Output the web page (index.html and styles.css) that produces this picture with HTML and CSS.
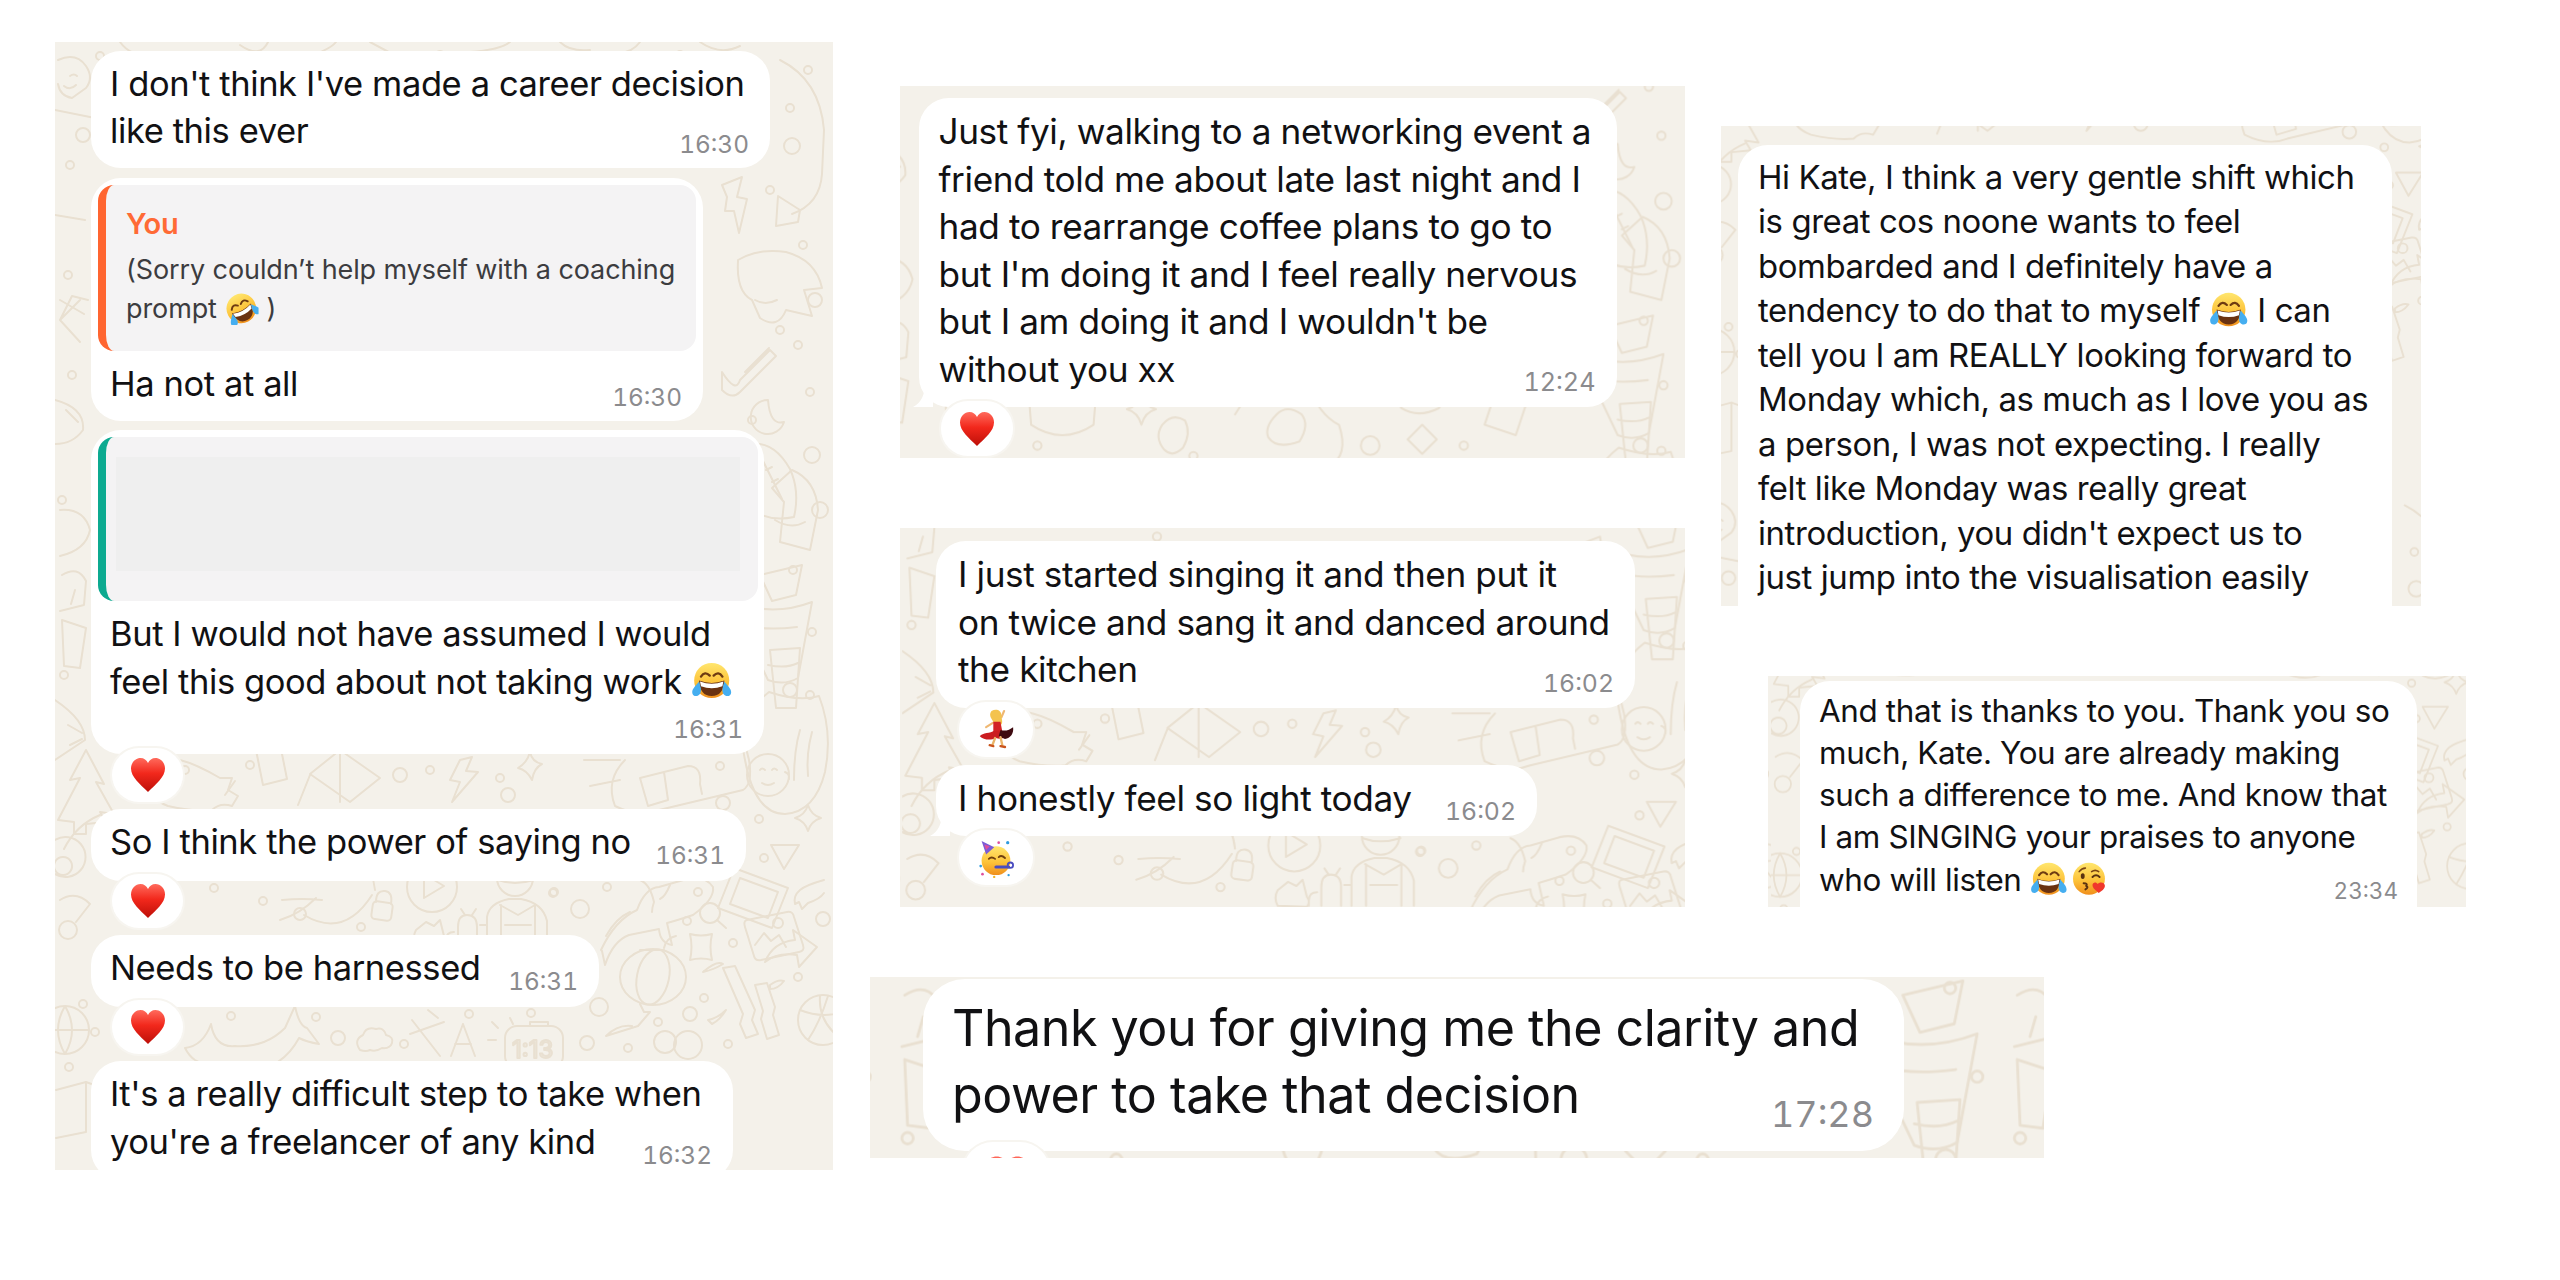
FILE: index.html
```html
<!DOCTYPE html>
<html lang="en">
<head>
<meta charset="utf-8">
<title>Chat screenshots</title>
<link rel="stylesheet" href="styles.css">
</head>
<body>
<svg class="defs" aria-hidden="true">
  <defs>
    <linearGradient id="g-heart" x1="0" y1="0" x2="0" y2="1"><stop offset="0" stop-color="#ff6a5c"/><stop offset=".45" stop-color="#f2281c"/><stop offset="1" stop-color="#bd0f08"/></linearGradient>
    <linearGradient id="g-face" x1="0" y1="0" x2="0" y2="1"><stop offset="0" stop-color="#ffe66e"/><stop offset=".55" stop-color="#fdc33a"/><stop offset="1" stop-color="#f08f1c"/></linearGradient>
    <symbol id="heart" viewBox="0 0 36 36"><path fill="url(#g-heart)" d="M18 35C10 27 1 20 1 11.500 1 5.500 5.500 1 10.500 1 14 1 16.700 3 18 6 19.300 3 22 1 25.500 1 30.500 1 35 5.500 35 11.500 35 20 26 27 18 35Z"/></symbol>
    <symbol id="joy" viewBox="0 0 42 40">
      <circle cx="21" cy="20" r="18" fill="url(#g-face)"/>
      <path d="M10 16q4-6 9-1M23 15q5-5 9 1" fill="none" stroke="#6e3b12" stroke-width="2.400" stroke-linecap="round"/>
      <path d="M8 20Q21 25 34 20 33 36 21 36 9 36 8 20Z" fill="#6a3211"/>
      <path d="M9 21Q21 25.500 33 21L32 26Q21 30 10 26Z" fill="#fff"/>
      <path d="M8 21c-2 3-7 7-7 11 0 3 2 4 4 4 3 0 5-3 5-6 0-3-1-6-2-9ZM34 21c2 3 7 7 7 11 0 3-2 4-4 4-3 0-5-3-5-6 0-3 1-6 2-9Z" fill="#45aef0"/>
    </symbol>
    <symbol id="rofl" viewBox="0 0 42 40"><g transform="rotate(-28 21 20)"><use href="#joy" width="42" height="40"/></g></symbol>
    <symbol id="kiss" viewBox="0 0 40 40">
      <circle cx="19" cy="20" r="18" fill="url(#g-face)"/>
      <path d="M8 12q3-4 7-4M22 12q4-3 8 0" fill="none" stroke="#7a4513" stroke-width="1.800" stroke-linecap="round"/>
      <ellipse cx="12" cy="17" rx="2.200" ry="3.200" fill="#5a3210"/>
      <path d="M23 18q4-4 8 0" fill="none" stroke="#5a3210" stroke-width="2.200" stroke-linecap="round"/>
      <path d="M13 25q5 0 3 3 3 2-1 4" fill="none" stroke="#5a3210" stroke-width="2.200" stroke-linecap="round"/>
      <path d="M30 36c-3-3-7-5-7-9 0-3 4-4 6-1 2-3 8-2 8 2 0 4-4 6-7 8Z" fill="#f0382c"/>
    </symbol>
    <symbol id="party" viewBox="0 0 40 44">
      <circle cx="20" cy="25" r="16" fill="url(#g-face)"/>
      <path d="M4 3l14 7-9 8Z" fill="#7a5bd6"/><path d="M7 7l6 2-4 4Z" fill="#e04f9b"/>
      <path d="M12 23q3-3 7 0M23 21q3-3 7 1" fill="none" stroke="#70400f" stroke-width="2" stroke-linecap="round"/>
      <path d="M20 32h14" stroke="#4a4cc0" stroke-width="3.600" stroke-linecap="round"/>
      <circle cx="36" cy="30" r="3" fill="none" stroke="#4a4cc0" stroke-width="2"/>
      <circle cx="3" cy="31" r="1.500" fill="#2f9be0"/><circle cx="5" cy="40" r="1.500" fill="#e04f9b"/><circle cx="33" cy="5" r="1.800" fill="#2f9be0"/><circle cx="23" cy="5" r="1.500" fill="#e04f9b"/><circle cx="34" cy="41" r="1.300" fill="#2f9be0"/><circle cx="18" cy="43" r="1.300" fill="#f0b429"/>
    </symbol>
    <symbol id="dancer" viewBox="0 0 40 44">
      <path d="M26 9l3-7M17 15l-8 5" fill="none" stroke="#efb873" stroke-width="2.400" stroke-linecap="round"/>
      <path d="M15 2c5-3 11-1 11 5 0 4 2 7 0 10-3 1-7-1-9-3-1-3-6-6-2-12Z" fill="#f4c34e"/>
      <path d="M17 14l8 0 2 11-10 1Z" fill="#d32225"/>
      <path d="M18 24C14 27 5 26 2 30c4 4 12 5 18 2 3 1 5 1 8 0l-2-8Z" fill="#cb1d20"/>
      <path d="M25 23c5 2 10 0 14-3 1 7-3 12-9 13l-7-3Z" fill="#3e0b10"/>
      <path d="M19 32l-3 8M25 31l2 9" stroke="#eab468" stroke-width="2.600" stroke-linecap="round"/>
      <path d="M13 40l4 1M25 41l5 1" stroke="#c9541c" stroke-width="2.600" stroke-linecap="round"/>
    </symbol>
    <pattern id="doodle" patternUnits="userSpaceOnUse" x="0" y="0" width="778" height="1128">
      <g transform="translate(-55 -42)" fill="none" stroke="#e9e0d1" stroke-width="2" stroke-linecap="round" stroke-linejoin="round">
        <!-- small dots -->
        <g>
          <circle cx="759" cy="819" r="4"/><circle cx="764" cy="858" r="4"/><circle cx="554" cy="892" r="4"/><circle cx="607" cy="887" r="4"/><circle cx="698" cy="892" r="4"/><circle cx="687" cy="921" r="4"/><circle cx="733" cy="943" r="4"/><circle cx="798" cy="977" r="4"/><circle cx="704" cy="998" r="4"/><circle cx="658" cy="1022" r="4"/><circle cx="531" cy="1013" r="4"/><circle cx="628" cy="1048" r="4"/><circle cx="728" cy="1044" r="4"/><circle cx="720" cy="766" r="4"/>
          <circle cx="263" cy="901" r="4"/><circle cx="214" cy="888" r="4"/><circle cx="361" cy="927" r="4"/><circle cx="553" cy="893" r="4"/><circle cx="231" cy="1016" r="4"/><circle cx="316" cy="1017" r="4"/><circle cx="404" cy="1044" r="4"/><circle cx="469" cy="1014" r="4"/><circle cx="95" cy="1032" r="4"/><circle cx="83" cy="1004" r="4"/><circle cx="69" cy="1067" r="4"/>
          <circle cx="790" cy="108" r="4"/><circle cx="808" cy="70" r="4"/><circle cx="770" cy="190" r="4"/><circle cx="803" cy="245" r="4"/><circle cx="780" cy="330" r="4"/><circle cx="798" cy="345" r="4"/><circle cx="810" cy="392" r="4"/><circle cx="752" cy="420" r="4"/><circle cx="70" cy="165" r="4"/><circle cx="68" cy="275" r="4"/><circle cx="72" cy="375" r="4"/><circle cx="62" cy="500" r="4"/><circle cx="64" cy="675" r="4"/><circle cx="810" cy="695" r="4"/><circle cx="793" cy="570" r="4"/><circle cx="812" cy="632" r="4"/>
          <circle cx="300" cy="590" r="4"/><circle cx="500" cy="640" r="4"/><circle cx="210" cy="690" r="4"/><circle cx="360" cy="700" r="4"/><circle cx="620" cy="690" r="4"/><circle cx="145" cy="610" r="4"/><circle cx="250" cy="765" r="4"/><circle cx="430" cy="770" r="4"/><circle cx="185" cy="770" r="4"/><circle cx="500" cy="778" r="4"/>
        </g>
        <!-- bigger circles -->
        <g>
          <circle cx="580" cy="909" r="9"/><circle cx="823" cy="919" r="7"/><circle cx="690" cy="1014" r="7"/><circle cx="587" cy="1043" r="7"/><circle cx="599" cy="1007" r="9"/><circle cx="665" cy="1042" r="11"/><circle cx="688" cy="1045" r="14"/><circle cx="508" cy="795" r="7"/><circle cx="723" cy="803" r="7"/><circle cx="338" cy="1038" r="7"/><circle cx="792" cy="146" r="8"/><circle cx="815" cy="300" r="7"/><circle cx="83" cy="135" r="7"/><circle cx="820" cy="510" r="8"/><circle cx="812" cy="455" r="8"/><circle cx="68" cy="930" r="9"/><circle cx="270" cy="640" r="7"/><circle cx="530" cy="690" r="9"/><circle cx="170" cy="670" r="8"/><circle cx="790" cy="690" r="7"/><circle cx="400" cy="775" r="7"/>
        </g>
        <!-- 4-point stars -->
        <path d="M808 805q3 10 13 13-10 3-13 13-3-10-13-13 10-3 13-13Z"/>
        <path d="M690 934q11 3 22 0-3 13 0 26-11-3-22 0 3-13 0-26Z"/>
        <path d="M530 752q2 10 12 12-8 4-10 16-5-10-14-12 9-5 12-16Z"/>
        <path d="M310 640q3 12 14 15-11 3-14 15-3-12-14-15 11-3 14-15Z"/>
        <path d="M580 670l14 14-14 14-14-14Z"/>
        <!-- paper planes -->
        <path d="M771 845l28 0-15 24Z"/>
        <path d="M778 196l-2 30 22-4 2-12Zm0 0l22 14"/>
        <!-- lightning -->
        <path d="M722 185l20-8-5 20 10 2-8 34-5-22-9 0 2-14Z"/>
        <path d="M460 760l-10 20 10 2-8 20 26-30-12-1 6-14Z"/>
        <!-- frames and cards -->
        <path d="M734 868l54 20-16 40-54-20ZM740 878l38 14-10 26-38-14Z"/>
        <path d="M747 920l40-8q6-1 7 5l9 28q2 6-4 7l-38 8q-6 1-7-4l-9-29q-2-6 2-7ZM755 945l9-12 7 8 8-6 7 12"/>
        <circle cx="778" cy="923" r="5"/>
        <!-- arrow -->
        <path d="M765 962q8-20 30-22l-2-10 24 17-18 20-2-12q-20-3-32 7Z"/>
        <!-- flame hand -->
        <path d="M824 880q-18 5-24 10-7 6-5 14l4-2 3 7 6-6q12-4 16-10"/>
        <!-- fish -->
        <path d="M601 950q14-30 36-40 8-22 22-23l28-8q18-4 26 8 2 12-20 28-18 6-26 8l5 22q-12-2-13-16l-30 6q-16 6-24 30l-3-14Z"/>
        <path d="M640 880q10 4 14 22-2 6-2 10M670 885q-5 12-10 14M630 912q-14 6-24 24"/>
        <!-- magnifier -->
        <circle cx="710" cy="913" r="10"/><path d="M717 920l9 8"/>
        <!-- lantern -->
        <ellipse cx="653" cy="977" rx="33" ry="28"/><ellipse cx="653" cy="977" rx="16" ry="28" transform="rotate(12 653 977)"/>
        <path d="M640 950h24M664 948q2-10 12-12M640 1004l4 8 6 0 -12 14-32 10q12-12 26-10"/>
        <!-- bamboo -->
        <path d="M723 968l12-2 20 44-3 10 6 14-12 4-6-14 3-10ZM755 985l12-2 8 24-2 8 6 20-12 4-6-20 2-8ZM703 972q14-12 20-8-10 6-20 8ZM770 985q8-6 14-4-6 8-14 8ZM708 1020q10-2 18-10-6 10-14 14Z"/>
        <!-- globe -->
        <circle cx="823" cy="1020" r="25"/><path d="M800 1010q25 10 46 0M808 1040q12-18 20-44M820 996q-2 25 20 42"/>
        <circle cx="65" cy="1030" r="24"/><path d="M42 1030h46M65 1006q-14 24 0 48M65 1006q14 24 0 48"/>
        <!-- clock -->
        <rect x="505" y="1026" width="58" height="42" rx="12"/><path d="M488 1040h8M492 1022l6 6M510 1018l3 6M530 1026v-4h18v4"/>
        <text x="512" y="1058" class="wall-text">1:13</text>
        <!-- cloud -->
        <path d="M360 1050q-7-10 3-15 3-9 13-6 8-2 10 6 8 2 6 8-2 6-10 5-6 4-12 2-4 2-10 0Z"/>
        <!-- X A -->
        <path d="M412 1020l28 36M444 1022l-34 12M428 1010l10 8M463 1024l-12 32M463 1024l12 32M455 1044h16"/>
        <!-- whale -->
        <path d="M185 1048q18-2 26-24 4 24 24 22 30 2 50-18l10-22q4 20 12 22l12 16q-12-2-20-6-16 30-50 34-30 2-54-12-6-4-10-12Z"/>
        <!-- padlock, propeller, play, person, cactus -->
        <rect x="372" y="902" width="20" height="18" rx="4" transform="rotate(8 382 911)"/><path d="M376 902q0-12 9-11 8 1 6 13"/>
        <path d="M375 890q-2-20-14-30M280 920q20-6 36-22M322 900q-20-2-40 0"/><circle cx="300" cy="914" r="6"/>
        <path d="M304 915q40 24 68-20"/>
        <circle cx="432" cy="887" r="25"/><path d="M424 874l20 12-20 12Z"/>
        <circle cx="515" cy="878" r="18"/><path d="M498 880q16 6 36 0M487 945v-28q2-14 22-18l12 0q22 4 26 22v24M501 905v40M535 905v40M505 925h26M500 905l18 10 17-10"/>
        <path d="M458 945v-18q0-12 9-12 10 0 10 12v18M454 932q-8 0-8 8v5M480 925l6 0M465 915l-4-6M472 915l4-6"/>
        <path d="M416 930l10-8 8 4 6-6 4 16q4 6 0 10l-28-1q-4-8 0-15Z"/>
        <!-- pine and drumstick -->
        <path d="M58 820l22-42-10 2 16-30 18 34-8-2 18 32-14-2 6 10-20 2v10H74v-12Z"/>
        <path d="M180 760q-28-8-32 16-2 22 20 30 26 6 44 4 8-8 20-4l6-10-10-6 4-12-12 0q-24-14-40-18Z"/>
        <path d="M225 795l10-14"/>
        <!-- bag and kite -->
        <path d="M340 750l40 28-30 24-40-28ZM340 750v52M310 775l-12 30"/>
        <path d="M255 745l24-6 8 40-24 6Z"/>
        <path d="M584 760h36M590 786l30-6M625 760q-20 20-10 46 24 12 44 4l84-20q10-6 6-30l-10-40M640 778l24-6 4 28-20 6ZM664 772l24-6q14 0 12 18l2 10"/>
        <!-- avocado with face -->
        <path d="M745 760q-10-42 24-68 30 10 50 4 14 36 6 76-10 40-40 42-30 0-40-54Z"/>
        <circle cx="768" cy="775" r="21"/><path d="M760 770q2-3 5 0M772 770q2-3 5 0M762 783q6 4 12 0M785 772q5 2 4 7"/>
        <!-- right strip top -->
        <path d="M780 60q40 20 44 70l-2 44q-2 30-30 40"/>
        <path d="M738 260q20-12 48-8 30 8 36 36l-18 2 8 26-26-6q-8 20-26 8l-8-18q-16-8-14-40ZM755 300q10 6 22 0"/>
        <path d="M722 372q14 22 18 8l30-30 6 6-36 36q-8 8-18-2ZM745 372l24-24"/>
        <path d="M768 400a17 17 0 1 0 16 22q-14 4-16-22Z"/>
        <path d="M792 470q24 10 26 40l-8 40-30-8 4-40-12-14Z"/>
        <path d="M775 520q16 10 30 2"/>
        <path d="M760 575l42-10-6 30-24 6Z"/>
        <path d="M770 650l30-2-4 60-20 0ZM768 665q18 4 30-2"/>
        <path d="M800 730q-6 20-6 50M812 732q-6 22-4 44"/>
        <!-- bowl (pot) -->
        <path d="M730 600q40 18 82 2l-14 76q-14 8-30 2ZM745 625q20 6 52 2"/>
        <!-- ball with stitches -->
        <path d="M744 445q28-8 46 24 10 22 4 48-28 6-50-12-8-30 0-60ZM760 455l22 44M766 470l6-3M772 482l6-3"/>
        <!-- left strip -->
        <path d="M58 60q18-8 28 6 8 12 0 22l-14 10q-12-2-14-14M70 76q4-3 7 0M64 86q6 5 12-1"/>
        <path d="M55 110l40 8M55 215l30 5M88 300l-16-4-12 24 20 22M60 300l24 14M60 320l20-20"/>
        <path d="M55 400q30 8 28 30-10 14-28 14M66 410l12 12"/>
        <path d="M60 510q24-2 30 20-4 20-30 26M62 575q16-10 24 6l-2 24-24 6M75 590l-4 14"/>
        <path d="M55 700q30 20 30 40l-30 20M62 620l24 8-6 40-16-2ZM68 725l14 8M70 745l12-6"/>
        <path d="M55 840a20 20 0 1 1 0 34M63 857a9 9 0 1 0 .1 0M100 815q-24 10-36 34M60 900q16-10 30 4l-14 18"/>
        <path d="M56 1090l30-8 0 50 -30 6M100 1085q-6 30 0 70M86 1082l60 22"/>
        <!-- top strip -->
        <path d="M120 42q10 14 30 14M240 45q20 14 28-3M300 60q30-10 36-18M370 42l30 16M470 52q30-2 40-10M560 42q10 10 30 8M640 42q-10 14-30 10M700 42q20 14 40 4"/>
        <circle cx="345" cy="60" r="5"/><circle cx="440" cy="56" r="5"/><circle cx="680" cy="55" r="4"/><circle cx="100" cy="56" r="4"/>
        <!-- hidden-middle doodles used by other panels -->
        <path d="M400 660q30-50 70-30 10 30 30 40 10 30-10 40M440 660q10-10 24 0 8 10-2 26-22 8-30-4-4-10 8-22Z"/>
        <path d="M330 670q10-12 22-4 6 12-2 26-10 10-18 2-10-12-2-24Z"/>
        <path d="M120 620l40 10-6 60-30-4ZM115 640q22 10 46 2"/>
        <path d="M210 600q30-10 60 10M200 620l4 50q30 20 60 0l4-50"/>
        <path d="M560 620q20-10 40 4 6 14-4 30-20 10-36 0-8-16 0-34ZM574 634l16 10"/>
        <path d="M650 640l30 10-10 30-30-10ZM700 600l10 40 22-10-6-40Z"/>
      </g>
    </pattern>
    <pattern id="wall-2" href="#doodle" patternTransform="translate(-23.800 -314.300) scale(1.040)"/>
    <pattern id="wall-3" href="#doodle" patternTransform="translate(2.200 -561.300) scale(1.040)"/>
    <pattern id="wall-4" href="#doodle" patternTransform="translate(24.700 -744) scale(1.430)"/>
    <pattern id="wall-5" href="#doodle" patternTransform="translate(-19.600 -732.300) scale(.970)"/>
    <pattern id="wall-6" href="#doodle" patternTransform="translate(3 -700) scale(.910)"/>
  </defs>
</svg>

<main class="collage">
  <section class="panel p1">
    <svg class="wall" aria-hidden="true"><rect class="wall-fill-1" width="100%" height="100%"/></svg>
    <div class="bubble b-a"><div class="body"><p class="text">I don't think I've made a career decision<br>like this ever</p><span class="time">16:30</span></div></div>
    <div class="bubble b-b">
      <div class="quote quote-you">
        <p class="quote-name">You</p>
        <p class="quote-text">(Sorry couldn’t help myself with a coaching<br>prompt <svg class="emoji rofl"><use href="#rofl"/></svg> )</p>
      </div>
      <div class="body"><p class="text">Ha not at all</p><span class="time">16:30</span></div>
    </div>
    <div class="bubble b-c">
      <div class="quote quote-hidden"><div class="redacted"></div></div>
      <div class="body"><p class="text text-tall">But I would not have assumed I would<br>feel this good about not taking work <svg class="emoji"><use href="#joy"/></svg></p><span class="time">16:31</span></div>
    </div>
    <div class="react react-1"><svg class="react-icon"><use href="#heart"/></svg></div>
    <div class="bubble b-d"><div class="body"><p class="text">So I think the power of saying no</p><span class="time">16:31</span></div></div>
    <div class="react react-2"><svg class="react-icon"><use href="#heart"/></svg></div>
    <div class="bubble b-e"><div class="body"><p class="text">Needs to be harnessed</p><span class="time">16:31</span></div></div>
    <div class="react react-3"><svg class="react-icon"><use href="#heart"/></svg></div>
    <div class="bubble b-f"><div class="body"><p class="text">It's a really difficult step to take when<br>you're a freelancer of any kind</p><span class="time">16:32</span></div></div>
  </section>

  <div class="right">
    <div class="top-row">
      <div class="col-b">
        <section class="panel p2">
          <svg class="wall" aria-hidden="true"><rect class="wall-fill-2" width="100%" height="100%"/></svg>
          <div class="bubble b-g">
            <svg class="tail" viewBox="0 0 20 24" aria-hidden="true"><path d="M20 0v24H0C8 20 12 12 12 0Z"/></svg>
            <div class="body"><p class="text">Just fyi, walking to a networking event a<br>friend told me about late last night and I<br>had to rearrange coffee plans to go to<br>but I'm doing it and I feel really nervous<br>but I am doing it and I wouldn't be<br>without you xx</p><span class="time">12:24</span></div>
          </div>
          <div class="react react-g"><svg class="react-icon"><use href="#heart"/></svg></div>
        </section>
        <section class="panel p3">
          <svg class="wall" aria-hidden="true"><rect class="wall-fill-3" width="100%" height="100%"/></svg>
          <div class="bubble b-h"><div class="body"><p class="text">I just started singing it and then put it<br>on twice and sang it and danced around<br>the kitchen</p><span class="time">16:02</span></div></div>
          <div class="react react-h"><svg class="react-icon icon-tall"><use href="#dancer"/></svg></div>
          <div class="bubble b-i">
            <svg class="tail" viewBox="0 0 20 24" aria-hidden="true"><path d="M20 0v24H0C8 20 12 12 12 0Z"/></svg>
            <div class="body"><p class="text">I honestly feel so light today</p><span class="time">16:02</span></div>
          </div>
          <div class="react react-i"><svg class="react-icon icon-tall"><use href="#party"/></svg></div>
        </section>
      </div>
      <div class="col-c">
        <section class="panel p5">
          <svg class="wall" aria-hidden="true"><rect class="wall-fill-5" width="100%" height="100%"/></svg>
          <div class="bubble b-k"><div class="body"><p class="text">Hi Kate, I think a very gentle shift which<br>is great cos noone wants to feel<br>bombarded and I definitely have a<br>tendency to do that to myself <svg class="emoji"><use href="#joy"/></svg> I can<br>tell you I am REALLY looking forward to<br>Monday which, as much as I love you as<br>a person, I was not expecting. I really<br>felt like Monday was really great<br>introduction, you didn't expect us to<br>just jump into the visualisation easily</p></div></div>
        </section>
        <section class="panel p6">
          <svg class="wall" aria-hidden="true"><rect class="wall-fill-6" width="100%" height="100%"/></svg>
          <div class="bubble b-l"><div class="body"><p class="text">And that is thanks to you. Thank you so<br>much, Kate. You are already making<br>such a difference to me. And know that<br>I am SINGING your praises to anyone<br>who will listen <svg class="emoji"><use href="#joy"/></svg><svg class="emoji kiss"><use href="#kiss"/></svg></p><span class="time">23:34</span></div></div>
        </section>
      </div>
    </div>
    <section class="panel p4">
      <svg class="wall" aria-hidden="true"><rect class="wall-fill-4" width="100%" height="100%"/></svg>
      <div class="bubble b-j"><div class="body"><p class="text">Thank you for giving me the clarity and<br>power to take that decision</p><span class="time">17:28</span></div></div>
      <div class="react react-j"><svg class="react-icon icon-large"><use href="#heart"/></svg></div>
    </section>
  </div>
</main>
</body>
</html>
```
FILE: styles.css
```css
* { box-sizing: border-box; }

html, body {
  margin: 0;
  padding: 0;
  background: #fff;
}

body {
  width: 2560px;
  height: 1280px;
  overflow: hidden;
  font-family: "Inter", "Liberation Sans", sans-serif;
  color: #111113;
}

.defs {
  position: absolute;
  width: 0;
  height: 0;
}

.wall-text {
  font-family: "Inter", sans-serif;
  font-size: 24px;
  font-weight: 400;
}

.collage {
  display: flex;
  align-items: flex-start;
  padding: 42px 0 0 55px;
  gap: 37px;
}

.right {
  margin-top: 44px;
  display: flex;
  flex-direction: column;
  gap: 70px;
}

.top-row {
  display: flex;
  align-items: flex-start;
  margin-left: 30px;
  gap: 36px;
}

.col-b, .col-c {
  display: flex;
  flex-direction: column;
  align-items: flex-start;
  gap: 70px;
}

.col-c { margin-top: 40px; }

.panel {
  position: relative;
  overflow: hidden;
  display: flex;
  flex-direction: column;
  align-items: flex-start;
  background: #f4f1ea;
  flex: none;
}

.wall {
  position: absolute;
  inset: 0;
  width: 100%;
  height: 100%;
}
.wall-fill-1 { fill: url(#doodle); }
.wall-fill-2 { fill: url(#wall-2); }
.wall-fill-3 { fill: url(#wall-3); }
.wall-fill-4 { fill: url(#wall-4); }
.wall-fill-5 { fill: url(#wall-5); }
.wall-fill-6 { fill: url(#wall-6); }

/* panel metrics */
.p1 { width: 778px; height: 1128px; padding: 8.5px 0 0 36px; --fs: 34.5px; --lh: 47.5px; --ls: -0.4px; --tfs: 24.4px; --pad-l: 19px; --pad-t: 9px; --pad-b: 15px; --t-r: 21px; --t-b: -2px; }
.p2 { width: 785px; height: 372px; padding: 12px 0 0 18.5px; --fs: 35.2px; --lh: 47.5px; --ls: -0.4px; --tfs: 25.2px; --pad-l: 20px; --pad-t: 10px; --pad-b: 14px; --t-r: 21px; --t-b: -2px; }
.p3 { width: 785px; height: 379px; padding: 13px 0 0 36px; --fs: 35.2px; --lh: 47.5px; --ls: -0.4px; --tfs: 24.8px; --pad-l: 22px; --pad-t: 10px; --pad-b: 14px; --t-r: 21px; --t-b: -2px; }
.p4 { width: 1174px; height: 181px; padding: 2px 0 0 53px; --fs: 50.2px; --lh: 67px; --ls: -0.5px; --tfs: 36px; --pad-l: 29px; --pad-t: 15px; --pad-b: 23px; --t-r: 30px; --t-b: -4px; }
.p5 { width: 700px; height: 480px; padding: 19px 0 0 17px; --fs: 32.9px; --lh: 44.5px; --ls: -0.4px; --tfs: 24px; --pad-l: 20px; --pad-t: 9.5px; --pad-b: 15px; --t-r: 20px; --t-b: -2px; }
.p6 { width: 698px; height: 231px; padding: 5px 0 0 32px; margin-left: 47px; --fs: 31.4px; --lh: 42.3px; --ls: -0.35px; --tfs: 22.5px; --pad-l: 19px; --pad-t: 8.5px; --pad-b: 20px; --t-r: 19px; --t-b: -1.5px; }

/* message bubbles */
.bubble {
  position: relative;
  flex: none;
  background: #fff;
  border-radius: 30px;
}

.body {
  display: grid;
  padding: var(--pad-t) 0 var(--pad-b) var(--pad-l);
}

.text, .time { grid-area: 1 / 1; }

.text {
  margin: 0;
  font-size: var(--fs);
  line-height: var(--lh);
  letter-spacing: var(--ls);
  white-space: nowrap;
}

.time {
  justify-self: end;
  align-self: end;
  margin: 0 var(--t-r) var(--t-b) 0;
  font-size: var(--tfs);
  font-variant-numeric: tabular-nums;
  line-height: 1;
  color: #8b8b8e;
}

.text-tall { margin-bottom: 34px; }

.emoji {
  display: inline-block;
  width: 1.2em;
  height: 1.13em;
  vertical-align: -0.2em;
}
.emoji.rofl { width: 1.28em; height: 1.22em; vertical-align: -0.28em; }
.emoji.kiss { margin-left: 0.1em; }

.tail {
  position: absolute;
  left: -13px;
  bottom: 0;
  width: 34px;
  height: 24px;
  fill: #fff;
}

.b-a { width: 679px; margin-bottom: 10.5px; }
.b-a .body { padding-bottom: 13px; }
.b-b { width: 612px; margin-bottom: 9px; }
.b-b .body { padding-bottom: 13.5px; }
.b-c { width: 673px; }
.b-d { width: 655px; margin-top: 7px; }
.b-e { width: 508px; margin-top: 7px; }
.b-f { width: 642px; margin-top: 7px; }
.b-g { width: 698px; }
.b-h { width: 699px; }
.b-i { width: 601px; margin-top: 8px; }
.b-j { width: 981px; border-radius: 42px; }
.b-k { width: 654px; height: 520px; border-radius: 30px; }
.b-l { width: 617px; height: 270px; border-radius: 30px; }

/* quoted replies */
.quote {
  display: flex;
  flex-direction: column;
  margin: 7px 7px 0;
  background: #f4f3f4;
  border-left: 8px solid;
  border-radius: 16px;
}

.quote-you {
  height: 166px;
  padding: 19px 0 0 20px;
  border-left-color: #ff6530;
}

.quote-name {
  margin: 0;
  font-size: 29px;
  line-height: 40px;
  font-weight: 600;
  letter-spacing: -0.3px;
  color: #ff6a35;
}

.quote-text {
  margin: 5.5px 0 0;
  font-size: 27px;
  line-height: 39px;
  letter-spacing: -0.1px;
  color: #3c3c3f;
  white-space: nowrap;
}

.quote-hidden {
  width: 660px;
  height: 164px;
  padding: 20px 18px 30px 10px;
  border-left-color: #0caa90;
}

.redacted {
  width: 100%;
  height: 114px;
  background: #efefef;
}

/* reactions */
.react {
  position: relative;
  flex: none;
  display: flex;
  align-items: center;
  justify-content: center;
  width: 71px;
  height: 54px;
  background: #fff;
  border-radius: 27px;
  box-shadow: 0 0 0 2px #f7f5f0;
}

.react-icon { width: 36px; height: 36px; }
.icon-tall { width: 36px; height: 40px; }
.icon-large { width: 50px; height: 50px; }

.react-1 { margin: -6px 0 0 21px; }
.react-2 { margin: -6.5px 0 0 21px; }
.react-3 { margin: -6.5px 0 0 21px; }
.react-g { margin: -6px 0 0 22px; width: 72px; height: 55px; }
.react-h { margin: -6px 0 0 23px; width: 74px; height: 55px; }
.react-i { margin: -6px 0 0 23px; width: 74px; height: 55px; }
.react-j { margin: -9px 0 0 40px; width: 87px; height: 76px; border-radius: 30px; }
```
